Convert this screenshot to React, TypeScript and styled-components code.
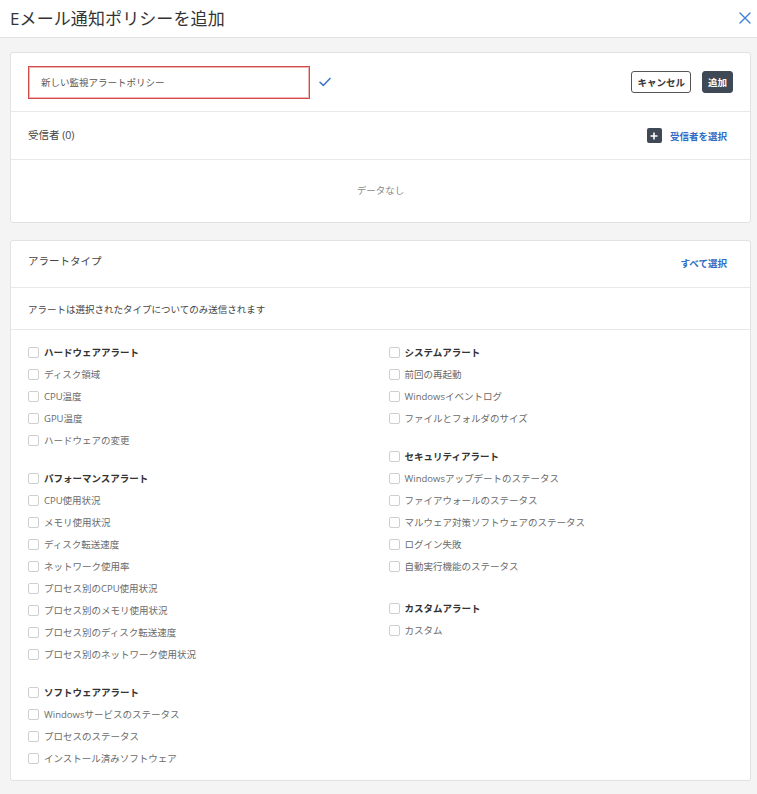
import { FC } from "react";
import styled, { createGlobalStyle } from "styled-components";

const GlobalStyle = createGlobalStyle`
  html, body {
    margin: 0;
    padding: 0;
    background: #f4f4f4;
  }
  body {
    font-family: "Open Sans", "Noto Sans CJK JP", sans-serif;
    color: #444;
  }
  * {
    box-sizing: border-box;
  }
`;

interface AlertGroup {
  title: string;
  items: string[];
  offset?: number;
}

const leftGroups: AlertGroup[] = [
  {
    title: "ハードウェアアラート",
    items: ["ディスク領域", "CPU温度", "GPU温度", "ハードウェアの変更"],
  },
  {
    title: "パフォーマンスアラート",
    items: [
      "CPU使用状況",
      "メモリ使用状況",
      "ディスク転送速度",
      "ネットワーク使用率",
      "プロセス別のCPU使用状況",
      "プロセス別のメモリ使用状況",
      "プロセス別のディスク転送速度",
      "プロセス別のネットワーク使用状況",
    ],
  },
  {
    title: "ソフトウェアアラート",
    items: [
      "Windowsサービスのステータス",
      "プロセスのステータス",
      "インストール済みソフトウェア",
    ],
  },
];

const rightGroups: AlertGroup[] = [
  {
    title: "システムアラート",
    items: ["前回の再起動", "Windowsイベントログ", "ファイルとフォルダのサイズ"],
  },
  {
    title: "セキュリティアラート",
    items: [
      "Windowsアップデートのステータス",
      "ファイアウォールのステータス",
      "マルウェア対策ソフトウェアのステータス",
      "ログイン失敗",
      "自動実行機能のステータス",
    ],
  },
  {
    title: "カスタムアラート",
    items: ["カスタム"],
    offset: 4,
  },
];

const Page = styled.div`
  min-height: 100vh;
  background: #f4f4f4;
`;

const Header = styled.header`
  height: 38px;
  background: #fff;
  border-bottom: 1px solid #e2e2e2;
  display: flex;
  align-items: center;
  justify-content: space-between;
  padding: 0 5px 2px 10px;
`;

const Title = styled.h1`
  margin: 0;
  font-size: 17px;
  font-weight: 400;
  color: #333;
  letter-spacing: 0.1px;
`;

const CloseButton = styled.button`
  border: 0;
  background: none;
  padding: 0;
  width: 14px;
  height: 14px;
  display: flex;
  align-items: center;
  justify-content: center;
  cursor: pointer;
`;

const Content = styled.main`
  display: flex;
  flex-direction: column;
  gap: 17px;
  padding: 14px 6px 14px 10px;
`;

const Card = styled.section`
  background: #fff;
  border: 1px solid #e2e2e2;
  border-radius: 3px;
`;

const Row = styled.div<{ $height: number; $divider?: boolean }>`
  height: ${(p) => p.$height}px;
  display: flex;
  align-items: center;
  justify-content: space-between;
  padding: 0 17px;
  border-bottom: ${(p) => (p.$divider ? "1px solid #e8e8e8" : "0")};
`;

const NameField = styled.div`
  display: flex;
  align-items: center;
  gap: 9px;
`;

const NameInput = styled.input`
  width: 282px;
  height: 33px;
  border: 1px solid #d24b4b;
  box-shadow: inset 0 0 0 1px rgba(230, 130, 130, 0.6);
  border-radius: 0;
  padding: 0 12px;
  font-family: inherit;
  font-size: 9.5px;
  color: #555;
  outline: none;
`;

const Actions = styled.div`
  display: flex;
  align-items: center;
  gap: 11px;
`;

const Button = styled.button<{ $primary?: boolean }>`
  height: 22px;
  padding: 0 5px;
  border-radius: 3px;
  border: 1px solid ${(p) => (p.$primary ? "#3e4955" : "#555")};
  background: ${(p) => (p.$primary ? "#3e4955" : "#fff")};
  color: ${(p) => (p.$primary ? "#fff" : "#333")};
  font-family: inherit;
  font-size: 9.5px;
  font-weight: 700;
  cursor: pointer;
`;

const Label = styled.span<{ $raise?: number }>`
  font-size: 10.5px;
  color: #444;
  margin-bottom: ${(p) => p.$raise ?? 0}px;
`;

const LinkButton = styled.a<{ $raise?: number }>`
  display: flex;
  align-items: center;
  gap: 8px;
  margin-right: 6px;
  margin-bottom: ${(p) => p.$raise ?? 0}px;
  font-size: 9.5px;
  font-weight: 700;
  color: #2e6cc5;
  text-decoration: none;
  cursor: pointer;
`;

const PlusBox = styled.span`
  width: 15px;
  height: 15px;
  border-radius: 2px;
  background: #3e4955;
  display: flex;
  align-items: center;
  justify-content: center;
`;

const Empty = styled.div`
  height: 62px;
  display: flex;
  align-items: center;
  justify-content: center;
  padding-bottom: 2px;
  font-size: 9.5px;
  color: #888;
`;

const Note = styled.span`
  font-size: 9.5px;
  color: #444;
`;

const Columns = styled.div`
  display: grid;
  grid-template-columns: 1fr 1fr;
  column-gap: 16px;
  padding: 11px 17px 11px;
`;

const Column = styled.div`
  display: flex;
  flex-direction: column;
  gap: 16px;
`;

const Group = styled.ul<{ $offset?: number }>`
  list-style: none;
  margin: ${(p) => p.$offset ?? 0}px 0 0;
  padding: 0;
`;

const Option = styled.li<{ $strong?: boolean }>`
  height: 22px;
  display: flex;
  align-items: center;
  gap: 5px;
  font-size: 9.5px;
  font-weight: ${(p) => (p.$strong ? 700 : 400)};
  color: ${(p) => (p.$strong ? "#333" : "#6a6a6a")};
  white-space: nowrap;
`;

const Box = styled.span`
  width: 11px;
  height: 11px;
  flex: none;
  border: 1px solid #cfcfcf;
  border-radius: 2px;
  background: #fff;
`;

const CheckGroup: FC<AlertGroup> = ({ title, items, offset }) => (
  <Group $offset={offset}>
    <Option $strong>
      <Box />
      {title}
    </Option>
    {items.map((item) => (
      <Option key={item}>
        <Box />
        {item}
      </Option>
    ))}
  </Group>
);

export default function App() {
  return (
    <Page>
      <GlobalStyle />
      <Header>
        <Title>Eメール通知ポリシーを追加</Title>
        <CloseButton aria-label="閉じる">
          <svg width="12" height="12" viewBox="0 0 12 12">
            <path
              d="M1 1 L11 11 M11 1 L1 11"
              stroke="#3d7ed6"
              strokeWidth="1.4"
              strokeLinecap="round"
            />
          </svg>
        </CloseButton>
      </Header>

      <Content>
        <Card>
          <Row $height={59} $divider>
            <NameField>
              <NameInput defaultValue="新しい監視アラートポリシー" />
              <svg width="12" height="10" viewBox="0 0 12 10">
                <path
                  d="M1 5.2 L4.3 8.4 L11 1.4"
                  fill="none"
                  stroke="#3b73c4"
                  strokeWidth="1.5"
                  strokeLinecap="round"
                  strokeLinejoin="round"
                />
              </svg>
            </NameField>
            <Actions>
              <Button>キャンセル</Button>
              <Button $primary>追加</Button>
            </Actions>
          </Row>
          <Row $height={48} $divider>
            <Label $raise={2}>受信者 (0)</Label>
            <LinkButton>
              <PlusBox>
                <svg width="8" height="8" viewBox="0 0 8 8">
                  <path d="M4 0.5 V7.5 M0.5 4 H7.5" stroke="#fff" strokeWidth="1.6" />
                </svg>
              </PlusBox>
              受信者を選択
            </LinkButton>
          </Row>
          <Empty>データなし</Empty>
        </Card>

        <Card>
          <Row $height={47} $divider>
            <Label $raise={8}>アラートタイプ</Label>
            <LinkButton $raise={3}>すべて選択</LinkButton>
          </Row>
          <Row $height={42} $divider>
            <Note>アラートは選択されたタイプについてのみ送信されます</Note>
          </Row>
          <Columns>
            <Column>
              {leftGroups.map((g) => (
                <CheckGroup key={g.title} {...g} />
              ))}
            </Column>
            <Column>
              {rightGroups.map((g) => (
                <CheckGroup key={g.title} {...g} />
              ))}
            </Column>
          </Columns>
        </Card>
      </Content>
    </Page>
  );
}
